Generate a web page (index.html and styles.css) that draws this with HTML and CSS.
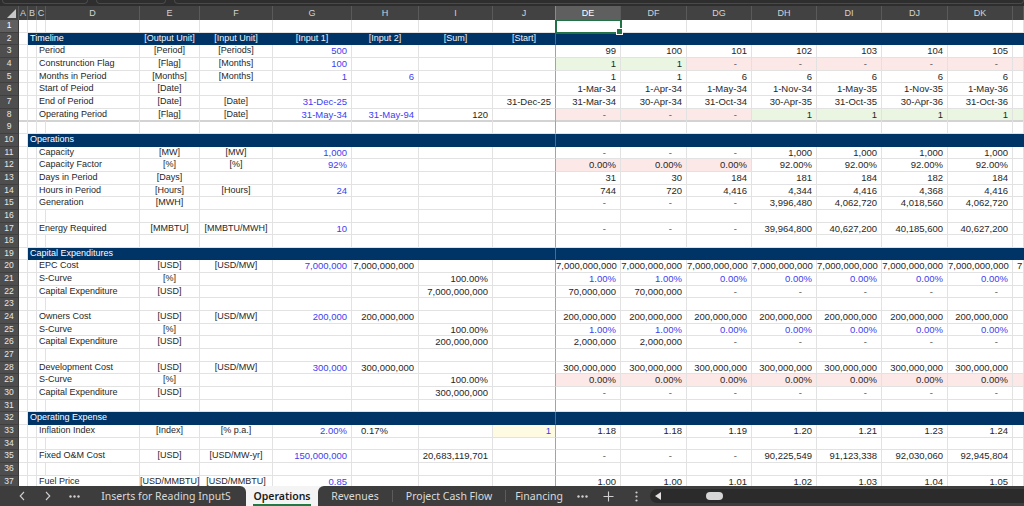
FILE: index.html
```html
<!DOCTYPE html>
<html>
<head>
<meta charset="utf-8">
<title>Operations</title>
<link rel="stylesheet" href="styles.css">
</head>
<body>
<div class="topstrip"><span class="fb fb1"></span><span class="fb fb2"></span><span class="fb fb3"></span></div>
<div class="cols">
<span class="corner"><svg width="9" height="9" viewBox="0 0 9 9"><polygon points="9,0 9,9 0,9" fill="#c8c8c8"/></svg></span><span>A</span><span>B</span><span>C</span><span>D</span><span>E</span><span>F</span><span>G</span><span>H</span><span>I</span><span class="j">J</span><span class="on">DE</span><span>DF</span><span>DG</span><span>DH</span><span>DI</span><span>DJ</span><span>DK</span><span></span>
</div>
<div class="sheet">
<div class="r"><b class="hon">1</b><i></i><i></i><i></i><i></i><i></i><i></i><i></i><i></i><i></i><i class="j"></i><i class="sel"></i><i></i><i></i><i></i><i></i><i></i><i></i><i></i></div>
<div class="r bar"><b>2</b><i></i><span class="t">Timeline</span><span class="u">[Output Unit]</span><span class="u">[Input Unit]</span><span class="u">[Input 1]</span><span class="u">[Input 2]</span><span class="u">[Sum]</span><span class="u j">[Start]</span><i></i><i></i><i></i><i></i><i></i><i></i><i></i><i></i></div>
<div class="r"><b>3</b><i></i><i></i><span class="l">Period</span><span class="u">[Period]</span><span class="u">[Periods]</span><span class="in">500</span><i></i><i></i><i class="j"></i><span>99</span><span>100</span><span>101</span><span>102</span><span>103</span><span>104</span><span>105</span><i></i></div>
<div class="r"><b>4</b><i></i><i></i><span class="l">Construnction Flag</span><span class="u">[Flag]</span><span class="u">[Months]</span><span class="in">100</span><i></i><i></i><i class="j"></i><span class="gr">1</span><span class="gr">1</span><span class="d pk">-</span><span class="d pk">-</span><span class="d pk">-</span><span class="d pk">-</span><span class="d pk">-</span><i class="pk"></i></div>
<div class="r"><b>5</b><i></i><i></i><span class="l">Months in Period</span><span class="u">[Months]</span><span class="u">[Months]</span><span class="in">1</span><span class="in">6</span><i></i><i class="j"></i><span>1</span><span>1</span><span>6</span><span>6</span><span>6</span><span>6</span><span>6</span><i></i></div>
<div class="r"><b>6</b><i></i><i></i><span class="l">Start of Peiod</span><span class="u">[Date]</span><i></i><i></i><i></i><i></i><i class="j"></i><span>1-Mar-34</span><span>1-Apr-34</span><span>1-May-34</span><span>1-Nov-34</span><span>1-May-35</span><span>1-Nov-35</span><span>1-May-36</span><i></i></div>
<div class="r"><b>7</b><i></i><i></i><span class="l">End of Period</span><span class="u">[Date]</span><span class="u">[Date]</span><span class="in">31-Dec-25</span><i></i><i></i><span class="j">31-Dec-25</span><span>31-Mar-34</span><span>30-Apr-34</span><span>31-Oct-34</span><span>30-Apr-35</span><span>31-Oct-35</span><span>30-Apr-36</span><span>31-Oct-36</span><i></i></div>
<div class="r sep"><b>8</b><i></i><i></i><span class="l">Operating Period</span><span class="u">[Flag]</span><span class="u">[Date]</span><span class="in">31-May-34</span><span class="in">31-May-94</span><span>120</span><i class="j"></i><span class="d pk">-</span><span class="d pk">-</span><span class="d pk">-</span><span class="gr">1</span><span class="gr">1</span><span class="gr">1</span><span class="gr">1</span><i class="gr"></i></div>
<div class="r"><b>9</b><i></i><i></i><i></i><i></i><i></i><i></i><i></i><i></i><i></i><i class="j"></i><i></i><i></i><i></i><i></i><i></i><i></i><i></i><i></i></div>
<div class="r bar"><b>10</b><i></i><span class="t">Operations</span><i></i><i></i><i></i><i></i><i></i><i class="j"></i><i></i><i></i><i></i><i></i><i></i><i></i><i></i><i></i></div>
<div class="r"><b>11</b><i></i><i></i><span class="l">Capacity</span><span class="u">[MW]</span><span class="u">[MW]</span><span class="in">1,000</span><i></i><i></i><i class="j"></i><span class="d">-</span><span class="d">-</span><span class="d">-</span><span>1,000</span><span>1,000</span><span>1,000</span><span>1,000</span><i></i></div>
<div class="r"><b>12</b><i></i><i></i><span class="l">Capacity Factor</span><span class="u">[%]</span><span class="u">[%]</span><span class="in">92%</span><i></i><i></i><i class="j"></i><span class="pk">0.00%</span><span class="pk">0.00%</span><span class="pk">0.00%</span><span>92.00%</span><span>92.00%</span><span>92.00%</span><span>92.00%</span><i></i></div>
<div class="r"><b>13</b><i></i><i></i><span class="l">Days in Period</span><span class="u">[Days]</span><i></i><i></i><i></i><i></i><i class="j"></i><span>31</span><span>30</span><span>184</span><span>181</span><span>184</span><span>182</span><span>184</span><i></i></div>
<div class="r"><b>14</b><i></i><i></i><span class="l">Hours in Period</span><span class="u">[Hours]</span><span class="u">[Hours]</span><span class="in">24</span><i></i><i></i><i class="j"></i><span>744</span><span>720</span><span>4,416</span><span>4,344</span><span>4,416</span><span>4,368</span><span>4,416</span><i></i></div>
<div class="r"><b>15</b><i></i><i></i><span class="l">Generation</span><span class="u">[MWH]</span><i></i><i></i><i></i><i></i><i class="j"></i><span class="d">-</span><span class="d">-</span><span class="d">-</span><span>3,996,480</span><span>4,062,720</span><span>4,018,560</span><span>4,062,720</span><i></i></div>
<div class="r"><b>16</b><i></i><i></i><i></i><i></i><i></i><i></i><i></i><i></i><i></i><i class="j"></i><i></i><i></i><i></i><i></i><i></i><i></i><i></i><i></i></div>
<div class="r"><b>17</b><i></i><i></i><span class="l">Energy Required</span><span class="u">[MMBTU]</span><span class="u">[MMBTU/MWH]</span><span class="in">10</span><i></i><i></i><i class="j"></i><span class="d">-</span><span class="d">-</span><span class="d">-</span><span>39,964,800</span><span>40,627,200</span><span>40,185,600</span><span>40,627,200</span><i></i></div>
<div class="r"><b>18</b><i></i><i></i><i></i><i></i><i></i><i></i><i></i><i></i><i></i><i class="j"></i><i></i><i></i><i></i><i></i><i></i><i></i><i></i><i></i></div>
<div class="r bar"><b>19</b><i></i><span class="t">Capital Expenditures</span><i></i><i></i><i></i><i></i><i></i><i class="j"></i><i></i><i></i><i></i><i></i><i></i><i></i><i></i><i></i></div>
<div class="r"><b>20</b><i></i><i></i><span class="l">EPC Cost</span><span class="u">[USD]</span><span class="u">[USD/MW]</span><span class="in">7,000,000</span><span>7,000,000,000</span><i></i><i class="j"></i><span>7,000,000,000</span><span>7,000,000,000</span><span>7,000,000,000</span><span>7,000,000,000</span><span>7,000,000,000</span><span>7,000,000,000</span><span>7,000,000,000</span><span class="cut">7</span></div>
<div class="r"><b>21</b><i></i><i></i><span class="l">S-Curve</span><span class="u">[%]</span><i></i><i></i><i></i><span>100.00%</span><i class="j"></i><span class="in">1.00%</span><span class="in">1.00%</span><span class="in">0.00%</span><span class="in">0.00%</span><span class="in">0.00%</span><span class="in">0.00%</span><span class="in">0.00%</span><i></i></div>
<div class="r"><b>22</b><i></i><i></i><span class="l">Capital Expenditure</span><span class="u">[USD]</span><i></i><i></i><i></i><span>7,000,000,000</span><i class="j"></i><span>70,000,000</span><span>70,000,000</span><span class="d">-</span><span class="d">-</span><span class="d">-</span><span class="d">-</span><span class="d">-</span><i></i></div>
<div class="r"><b>23</b><i></i><i></i><i></i><i></i><i></i><i></i><i></i><i></i><i></i><i class="j"></i><i></i><i></i><i></i><i></i><i></i><i></i><i></i><i></i></div>
<div class="r"><b>24</b><i></i><i></i><span class="l">Owners Cost</span><span class="u">[USD]</span><span class="u">[USD/MW]</span><span class="in">200,000</span><span>200,000,000</span><i></i><i class="j"></i><span>200,000,000</span><span>200,000,000</span><span>200,000,000</span><span>200,000,000</span><span>200,000,000</span><span>200,000,000</span><span>200,000,000</span><i></i></div>
<div class="r"><b>25</b><i></i><i></i><span class="l">S-Curve</span><span class="u">[%]</span><i></i><i></i><i></i><span>100.00%</span><i class="j"></i><span class="in">1.00%</span><span class="in">1.00%</span><span class="in">0.00%</span><span class="in">0.00%</span><span class="in">0.00%</span><span class="in">0.00%</span><span class="in">0.00%</span><i></i></div>
<div class="r"><b>26</b><i></i><i></i><span class="l">Capital Expenditure</span><span class="u">[USD]</span><i></i><i></i><i></i><span>200,000,000</span><i class="j"></i><span>2,000,000</span><span>2,000,000</span><span class="d">-</span><span class="d">-</span><span class="d">-</span><span class="d">-</span><span class="d">-</span><i></i></div>
<div class="r"><b>27</b><i></i><i></i><i></i><i></i><i></i><i></i><i></i><i></i><i></i><i class="j"></i><i></i><i></i><i></i><i></i><i></i><i></i><i></i><i></i></div>
<div class="r"><b>28</b><i></i><i></i><span class="l">Development Cost</span><span class="u">[USD]</span><span class="u">[USD/MW]</span><span class="in">300,000</span><span>300,000,000</span><i></i><i class="j"></i><span>300,000,000</span><span>300,000,000</span><span>300,000,000</span><span>300,000,000</span><span>300,000,000</span><span>300,000,000</span><span>300,000,000</span><i></i></div>
<div class="r"><b>29</b><i></i><i></i><span class="l">S-Curve</span><span class="u">[%]</span><i></i><i></i><i></i><span>100.00%</span><i class="j"></i><span class="pk">0.00%</span><span class="pk">0.00%</span><span class="pk">0.00%</span><span class="pk">0.00%</span><span class="pk">0.00%</span><span class="pk">0.00%</span><span class="pk">0.00%</span><i class="pk"></i></div>
<div class="r"><b>30</b><i></i><i></i><span class="l">Capital Expenditure</span><span class="u">[USD]</span><i></i><i></i><i></i><span>300,000,000</span><i class="j"></i><span class="d">-</span><span class="d">-</span><span class="d">-</span><span class="d">-</span><span class="d">-</span><span class="d">-</span><span class="d">-</span><i></i></div>
<div class="r"><b>31</b><i></i><i></i><i></i><i></i><i></i><i></i><i></i><i></i><i></i><i class="j"></i><i></i><i></i><i></i><i></i><i></i><i></i><i></i><i></i></div>
<div class="r bar"><b>32</b><i></i><span class="t">Operating Expense</span><i></i><i></i><i></i><i></i><i></i><i class="j"></i><i></i><i></i><i></i><i></i><i></i><i></i><i></i><i></i></div>
<div class="r"><b>33</b><i></i><i></i><span class="l">Inflation Index</span><span class="u">[Index]</span><span class="u">[% p.a.]</span><span class="in">2.00%</span><span class="p">0.17%</span><i></i><span class="j yl in">1</span><span>1.18</span><span>1.18</span><span>1.19</span><span>1.20</span><span>1.21</span><span>1.23</span><span>1.24</span><i></i></div>
<div class="r"><b>34</b><i></i><i></i><i></i><i></i><i></i><i></i><i></i><i></i><i></i><i class="j"></i><i></i><i></i><i></i><i></i><i></i><i></i><i></i><i></i></div>
<div class="r"><b>35</b><i></i><i></i><span class="l">Fixed O&amp;M Cost</span><span class="u">[USD]</span><span class="u">[USD/MW-yr]</span><span class="in">150,000,000</span><i></i><span>20,683,119,701</span><i class="j"></i><span class="d">-</span><span class="d">-</span><span class="d">-</span><span>90,225,549</span><span>91,123,338</span><span>92,030,060</span><span>92,945,804</span><i></i></div>
<div class="r"><b>36</b><i></i><i></i><i></i><i></i><i></i><i></i><i></i><i></i><i></i><i class="j"></i><i></i><i></i><i></i><i></i><i></i><i></i><i></i><i></i></div>
<div class="r"><b>37</b><i></i><i></i><span class="l">Fuel Price</span><span class="u">[USD/MMBTU]</span><span class="u">[USD/MMBTU]</span><span class="in">0.85</span><i></i><i></i><i class="j"></i><span>1.00</span><span>1.00</span><span>1.01</span><span>1.02</span><span>1.03</span><span>1.04</span><span>1.05</span><i></i></div>
</div>
<div class="tabs">
  <div class="tgroup left">
    <span class="ico ch1"><svg width="6" height="10" viewBox="0 0 6 10"><path d="M5 1 1.2 5 5 9" fill="none" stroke="#cfcfcf" stroke-width="1.1"/></svg></span>
    <span class="ico ch2"><svg width="6" height="10" viewBox="0 0 6 10"><path d="M1 1 4.8 5 1 9" fill="none" stroke="#cfcfcf" stroke-width="1.1"/></svg></span>
    <span class="ico dots"><svg width="11" height="3" viewBox="0 0 11 3"><circle cx="1.5" cy="1.5" r="1.2" fill="#cfcfcf"/><circle cx="5.5" cy="1.5" r="1.2" fill="#cfcfcf"/><circle cx="9.5" cy="1.5" r="1.2" fill="#cfcfcf"/></svg></span>
    <span class="tab t1">Inserts for Reading InputS</span>
  </div>
  <div class="active"><span class="atxt">Operations</span></div>
  <div class="tgroup right">
    <span class="tab t2">Revenues</span><span class="vsep"></span>
    <span class="tab t3">Project Cash Flow</span><span class="vsep"></span>
    <span class="tab t4">Financing</span>
    <span class="ico more"><svg width="11" height="3" viewBox="0 0 11 3"><circle cx="1.5" cy="1.5" r="1.2" fill="#cfcfcf"/><circle cx="5.5" cy="1.5" r="1.2" fill="#cfcfcf"/><circle cx="9.5" cy="1.5" r="1.2" fill="#cfcfcf"/></svg></span>
    <span class="ico plus"><svg width="11" height="11" viewBox="0 0 11 11"><path d="M5.5 0.5v10M0.5 5.5h10" stroke="#cfcfcf" stroke-width="1.1"/></svg></span>
    <span class="ico vdots"><svg width="3" height="11" viewBox="0 0 3 11"><circle cx="1.5" cy="1.5" r="1.1" fill="#cfcfcf"/><circle cx="1.5" cy="5.5" r="1.1" fill="#cfcfcf"/><circle cx="1.5" cy="9.5" r="1.1" fill="#cfcfcf"/></svg></span>
    <div class="track">
      <svg width="6" height="8" viewBox="0 0 6 8"><polygon points="6,0 6,8 0,4" fill="#e0e0e0"/></svg>
      <span class="thumb"></span>
    </div>
  </div>
</div>
</body>
</html>
```

FILE: styles.css
```css
:root {
  --cols: 19px 9px 9px 9px 94px 60px 73px 79px 67px 74px 63px 65px 66px 65px 65px 65px 66px 65px 11px;
  --navy: #003366;
  --grid: #e2e2e2;
  --blue: #3d3df2;
  --ink: #272727;
}

* { box-sizing: border-box; margin: 0; padding: 0; }

html, body {
  width: 1024px;
  height: 506px;
  overflow: hidden;
  background: #ffffff;
}

body {
  font-family: "Liberation Sans", Arial, sans-serif;
  display: flex;
  flex-direction: column;
}

/* top strip (formula bar edge) */
.topstrip {
  flex: none;
  height: 6px;
  background: #2e2e2e;
  display: flex;
  gap: 8px;
  padding-left: 2px;
}
.fb {
  height: 4px;
  border: 1px solid #4a4a4a;
  border-top: none;
  border-radius: 0 0 4px 4px;
}
.fb1 { width: 86px; }
.fb2 { width: 70px; }
.fb3 { flex: 1; }

/* column header row */
.cols {
  flex: none;
  display: grid;
  grid-template-columns: var(--cols);
  height: 14px;
  background: #424242;
}
.cols > span {
  color: #d4d4d4;
  font-size: 9px;
  line-height: 14px;
  text-align: center;
  border-right: 1px solid #5a5a5a;
}
.cols .corner {
  display: flex;
  align-items: flex-end;
  justify-content: flex-end;
  padding: 0 2px 2px 0;
}
.cols .on {
  background: #5f5f5f;
  color: #ffffff;
}
.cols .j { border-right-color: #8a8a8a; }

/* sheet */
.sheet {
  flex: 1;
  min-height: 0;
  overflow: hidden;
  display: flex;
  flex-direction: column;
}

.r {
  flex: none;
  display: grid;
  grid-template-columns: var(--cols);
  height: 12.67px;
}

.r > * {
  border-right: 1px solid var(--grid);
  border-bottom: 1px solid var(--grid);
  white-space: nowrap;
  font-size: 9.5px;
  line-height: 11.67px;
  color: var(--ink);
  font-style: normal;
  font-weight: normal;
  text-decoration: none;
}

.r > span {
  text-align: right;
  padding-right: 4px;
}

/* partially visible value at the right edge */
.r > .cut {
  text-align: left;
  padding: 0 0 0 4px;
  overflow: hidden;
}

/* row headers */
.r > b {
  background: #4e4e4e;
  color: #e6e6e6;
  font-size: 8.5px;
  text-align: center;
  border-right: 1px solid #3a3a3a;
  border-bottom: 1px solid #3f3f3f;
}
.r > b.hon { background: #5f5f5f; color: #ffffff; }

.r > .l {
  grid-column: span 2;
  text-align: left;
  padding: 0 0 0 2px;
  font-size: 9px;
}
.r > .u {
  text-align: center;
  padding: 0;
  font-size: 9px;
}
.r > .d { padding-right: 14px; color: #555555; }
.r > .p { padding-right: 30px; }
.r > .in { color: var(--blue); }
.r > .pk { background: #fde8e8; }
.r > .gr { background: #ebf6e2; }
.r > .yl { background: #fffbe2; }
.r > .j { border-right-color: #a3a3a3; }

/* selected cell */
.r > .sel {
  position: relative;
  z-index: 2;
  outline: 2px solid #217346;
  outline-offset: -1px;
}
.r > .sel::after {
  content: "";
  position: absolute;
  right: -3px;
  bottom: -3px;
  width: 5px;
  height: 5px;
  background: #217346;
  border: 1px solid #ffffff;
}

/* section bars */
.bar > * {
  background: var(--navy);
  border-right-color: var(--navy);
  border-bottom-color: var(--navy);
  color: #ffffff;
}
.bar > b {
  background: #4e4e4e;
  color: #e6e6e6;
  border-right-color: #3a3a3a;
  border-bottom-color: #3f3f3f;
}
.bar > i:first-of-type {
  background: #ffffff;
  border-right-color: var(--grid);
  border-bottom-color: var(--grid);
}
.bar > .t {
  grid-column: span 3;
  text-align: left;
  padding-left: 2px;
  font-size: 9px;
  color: #ffffff;
}
.bar > .u { color: #eef2f7; }
.bar > .j { border-right-color: #4d6a8c; }

.sep > *:not(b) { border-bottom: 2px solid #d3d3d3; }

/* sheet tabs */
.tabs {
  flex: none;
  height: 20px;
  display: flex;
  background: #f4f4f4;
  font-family: "Noto Sans", "Liberation Sans", sans-serif;
  font-size: 10.5px;
  color: #dadada;
}
.tgroup {
  display: flex;
  align-items: center;
  background: #3d3d3d;
  height: 20px;
}
.tgroup.left {
  width: 246px;
  border-top-right-radius: 6px;
  padding-left: 18px;
}
.tgroup.right {
  flex: 1;
  border-top-left-radius: 6px;
}
.ico {
  display: flex;
  align-items: center;
  justify-content: center;
}
.ch1 { width: 8px; }
.ch2 { width: 8px; margin-left: 18px; }
.dots { width: 12px; margin-left: 16px; }
.tab {
  display: flex;
  align-items: center;
  justify-content: center;
  white-space: nowrap;
  height: 20px;
}
.t1 { width: 148px; margin-left: 12px; }
.active {
  width: 72px;
  display: flex;
  align-items: center;
  justify-content: center;
  height: 20px;
}
.atxt {
  color: #1b1b1b;
  font-weight: 600;
  border-bottom: 2px solid #1e7a45;
  line-height: 15px;
  margin-top: 3px;
}
.t2 { width: 74px; }
.t3 { width: 112px; }
.t4 { width: 66px; }
.vsep {
  width: 1px;
  height: 12px;
  background: #5c5c5c;
}
.more { width: 12px; margin-left: 4px; }
.plus { width: 12px; margin-left: 14px; }
.vdots { width: 4px; margin-left: 20px; }
.track {
  flex: 1;
  height: 14px;
  margin-left: 12px;
  background: #2b2b2b;
  border-radius: 7px 0 0 7px;
  display: flex;
  align-items: center;
  padding-left: 5px;
}
.thumb {
  width: 17px;
  height: 8px;
  border-radius: 4px;
  background: #d6d6d6;
  margin-left: 45px;
}
```
